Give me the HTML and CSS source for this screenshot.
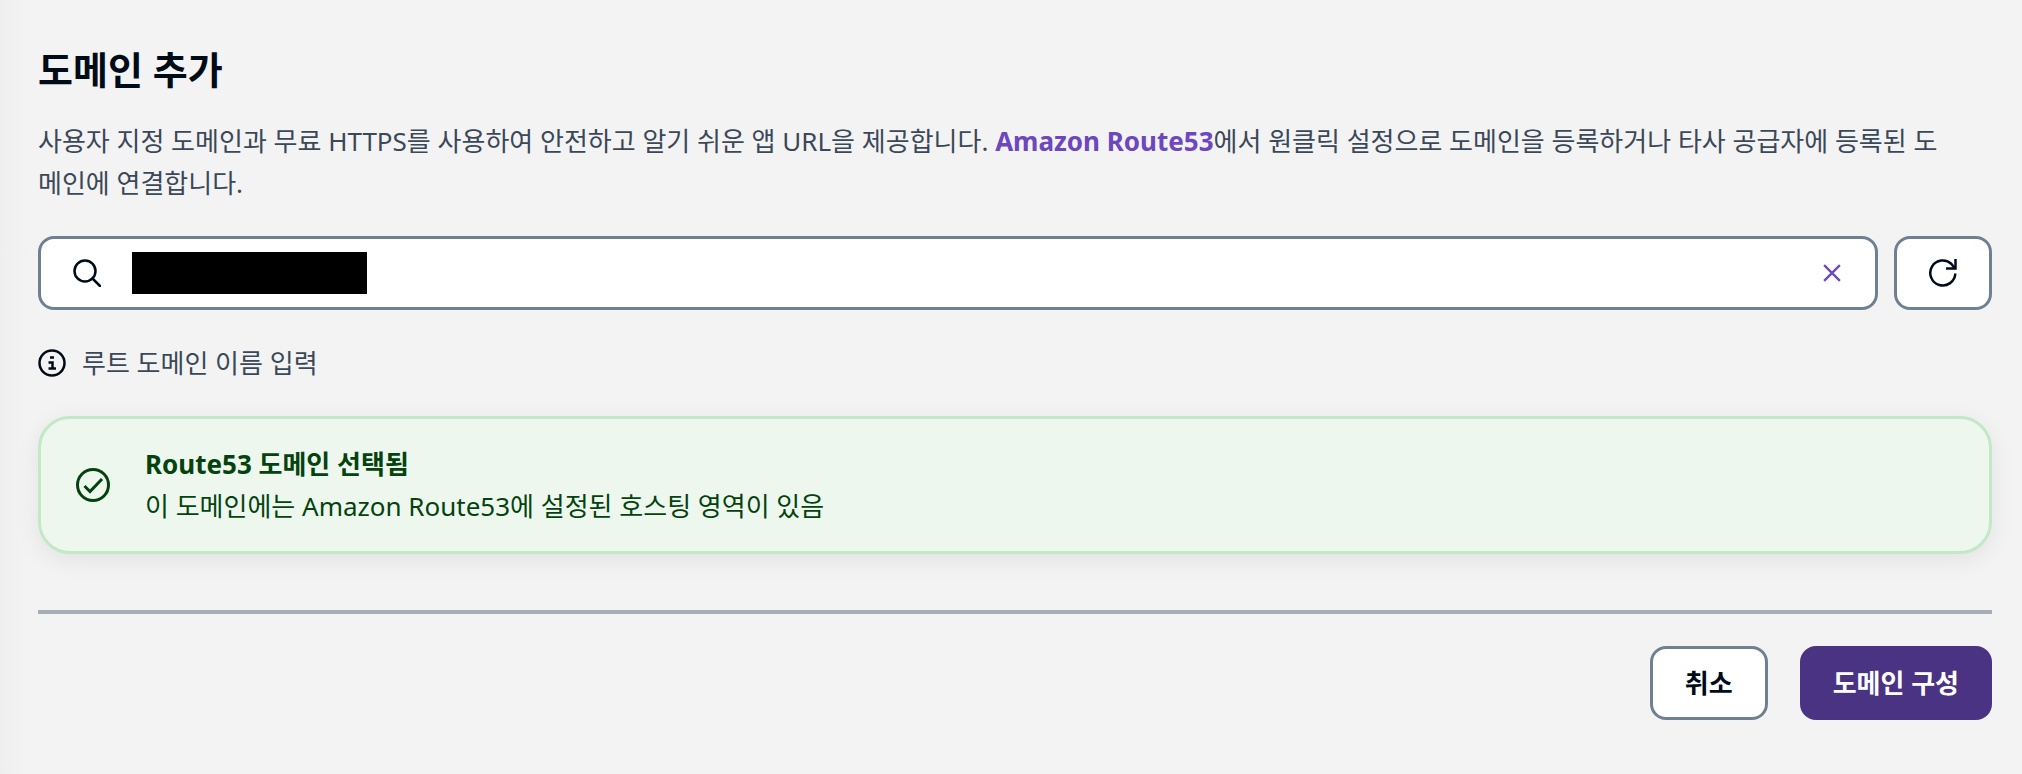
FILE: index.html
```html
<!DOCTYPE html>
<html lang="ko">
<head>
  <meta charset="UTF-8">
  <meta name="viewport" content="width=device-width, initial-scale=1.0">
  <title>도메인 추가</title>
  <link rel="stylesheet" href="styles.css">
</head>
<body>
  <main class="domain-page">
    <h1>도메인 추가</h1>
    <p class="description">사용자 지정 도메인과 무료 HTTPS를 사용하여 안전하고 알기 쉬운 앱 URL을 제공합니다. <a href="#">Amazon Route53</a>에서 원클릭 설정으로 도메인을 등록하거나 타사 공급자에 등록된 도<br>메인에 연결합니다.</p>

    <form id="domain-form">
      <div class="search-row">
        <div class="search-field">
          <svg class="icon-search" viewBox="0 0 28 28" aria-hidden="true">
            <circle cx="12" cy="12" r="10.500"/>
            <path d="M19.500 19.500l7.500 7.500"/>
          </svg>
          <span class="redacted"></span>
          <input type="text" id="domain-input" aria-label="루트 도메인 이름 입력">
          <button type="button" class="clear-button" aria-label="지우기">
            <svg viewBox="0 0 16 16"><path d="M1 1l14 14M15 1L1 15"/></svg>
          </button>
        </div>
        <button type="button" class="button refresh-button" aria-label="새로 고침">
          <svg viewBox="0 0 28 28">
            <path d="M26.300 14.500A12.500 12.500 0 1 1 22.500 5L26 9.500"/>
            <path d="M26.500 0v9.500H17"/>
          </svg>
        </button>
      </div>

      <div class="hint">
        <svg viewBox="0 0 28 28" aria-hidden="true">
          <circle cx="14" cy="14" r="12.500"/>
          <path d="M12 8.500h4M10.500 13.500h4v6M10.500 19.500h7.500"/>
        </svg>
        <label for="domain-input">루트 도메인 이름 입력</label>
      </div>

      <!-- Result message -->
      <div class="alert" role="status">
        <svg viewBox="0 0 34 34" aria-hidden="true">
          <circle cx="17" cy="17" r="15.500"/>
          <path d="M8.500 18l5.500 5.500L26 11"/>
        </svg>
        <div class="alert-text">
          <strong>Route53 도메인 선택됨</strong>
          <p>이 도메인에는 Amazon Route53에 설정된 호스팅 영역이 있음</p>
        </div>
      </div>

      <hr>

      <div class="actions">
        <button type="button" class="button">취소</button>
        <button type="submit" class="button primary">도메인 구성</button>
      </div>
    </form>
  </main>
</body>
</html>
```
FILE: styles.css
```css
* {
  box-sizing: border-box;
}

body {
  margin: 0;
  min-height: 100vh;
  font-family: 'Noto Sans', 'Noto Sans CJK KR', sans-serif;
  font-size: 26px;
  line-height: 42px;
  color: #3b4858;
  background: linear-gradient(to right, #efefef, #f3f3f3 28px);
}

.domain-page {
  padding: 42px 30px 52px 38px;
}

h1 {
  margin: 0;
  font-size: 38px;
  line-height: 54px;
  color: #000b18;
}

p {
  margin: 0;
}

.description {
  margin: 24px 0 32px;
}

.description a {
  color: #6c47bd;
  font-weight: bold;
  text-decoration: none;
}

svg {
  display: block;
  flex: none;
  fill: none;
  stroke: currentColor;
}

button {
  font: inherit;
  cursor: pointer;
}

/* Search */
.search-row {
  display: flex;
  gap: 16px;
}

.search-field {
  flex: 1;
  display: flex;
  align-items: center;
  height: 74px;
  padding: 0 34px 0 32px;
  background: #fff;
  border: 3px solid #708093;
  border-radius: 16px;
}

.icon-search {
  width: 28px;
  height: 28px;
  margin-right: 31px;
  color: #000b18;
  stroke-width: 2.5;
  stroke-linecap: round;
}

.redacted {
  width: 235px;
  height: 42px;
  background: #000;
}

.search-field input {
  flex: 1;
  min-width: 0;
  height: 42px;
  padding: 0 8px;
  font: inherit;
  border: none;
  outline: none;
  background: transparent;
}

.clear-button {
  padding: 0;
  border: none;
  background: none;
  color: #6c47bd;
}

.clear-button svg {
  width: 18px;
  height: 18px;
  stroke-width: 2;
}

.button {
  height: 74px;
  padding: 0 32px;
  font-weight: bold;
  color: #000b18;
  background: #fff;
  border: 3px solid #708093;
  border-radius: 16px;
}

.refresh-button svg {
  width: 28px;
  height: 28px;
  stroke-width: 2.5;
}

.hint {
  display: flex;
  align-items: center;
  gap: 16px;
  margin: 32px 0;
}

.hint svg {
  width: 28px;
  height: 28px;
  color: #000b18;
  stroke-width: 2.5;
}

/* Alert */
.alert {
  display: flex;
  align-items: center;
  gap: 35px;
  padding: 24px 35px;
  color: #04430e;
  background: #edf7ee;
  border: 3px solid #c3e8c7;
  border-radius: 32px;
  box-shadow: 0 6px 24px rgba(0, 0, 0, 0.07);
}

.alert svg {
  width: 34px;
  height: 34px;
  stroke-width: 3;
}

.alert strong {
  display: block;
}

hr {
  height: 4px;
  margin: 56px 0 32px;
  border: none;
  background: #a6adb7;
}

.actions {
  display: flex;
  justify-content: flex-end;
  gap: 32px;
}

.primary {
  padding: 0 30px;
  color: #fff;
  background: #4b3384;
  border-color: #4b3384;
}

@media (max-width: 900px) {
  .description br {
    display: none;
  }

  .redacted {
    width: 120px;
  }
}
```
